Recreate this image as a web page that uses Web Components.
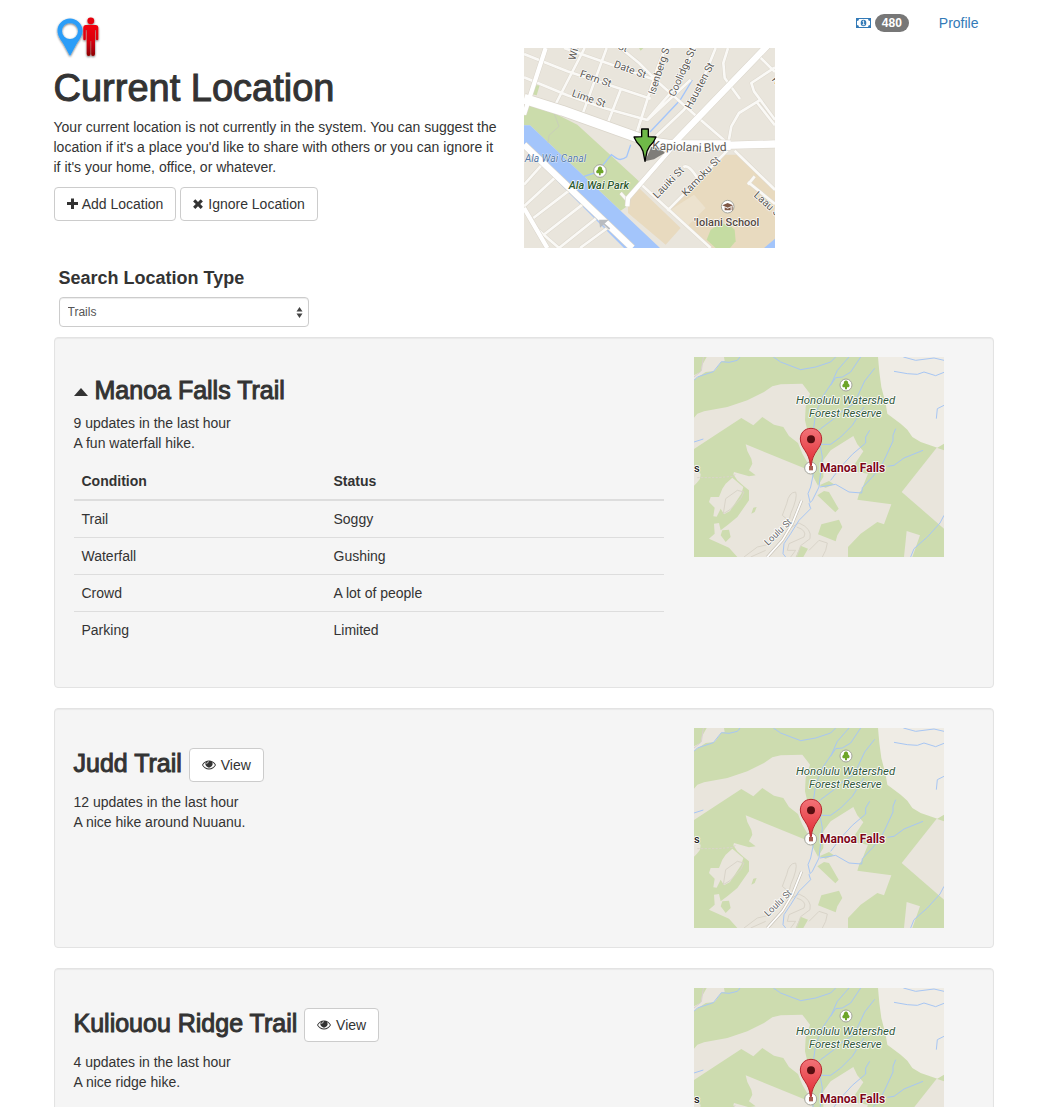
<!DOCTYPE html>
<html lang="en">
<head>
<meta charset="utf-8">
<meta name="viewport" content="width=device-width, initial-scale=1">
<title>Current Location</title>
<style>
  body { margin: 0; background: #fff; color: #333; font: 14px/20px "Liberation Sans", Arial, sans-serif; }
</style>
</head>
<body>
<location-page>
  <current-location slot="header">
    Your current location is not currently in the system. You can suggest the location if it's a place you'd like to share with others or you can ignore it if it's your home, office, or whatever.
  </current-location>
  <type-search slot="search"></type-search>
  <trail-card name="Manoa Falls Trail" updates="9" open>
    A fun waterfall hike.
    <condition-table slot="details" rows="Trail:Soggy;Waterfall:Gushing;Crowd:A lot of people;Parking:Limited"></condition-table>
  </trail-card>
  <trail-card name="Judd Trail" updates="12">A nice hike around Nuuanu.</trail-card>
  <trail-card name="Kuliouou Ridge Trail" updates="4">A nice ridge hike.</trail-card>
</location-page>

<script>
const define = (name, html, setup) => customElements.define(name, class extends HTMLElement {
  connectedCallback() {
    if (this.shadowRoot) return;
    this.attachShadow({ mode: 'open' }).innerHTML = html;
    if (setup) setup(this, this.shadowRoot);
  }
});

/* Small glyph icons, coloured by the surrounding text */
const ICONS = {
  plus: [11, 11, '<path d="M4 0.5h3v3.500h4v3h-4v4h-3v-4h-4v-3h4z"/>'],
  times: [10, 10, '<path d="M2.300 0.300L5 3 7.700 0.300 9.900 2.400 7.200 5.100 9.900 7.800 7.700 9.900 5 7.300 2.300 9.900 0.100 7.800 2.800 5.100 0.100 2.400z"/>'],
  eye: [14, 10, '<path fill-rule="evenodd" d="M7 0.500C10 0.500 12.600 2.300 14 5 12.600 7.700 10 9.500 7 9.500S1.400 7.700 0 5C1.400 2.300 4 0.500 7 0.500zM4.200 1.900C2.900 2.600 1.800 3.700 1 5 2.300 7.100 4.500 8.600 7 8.600S11.700 7.100 13 5C12.200 3.700 11.100 2.600 9.800 1.900A3.500 3.500 0 1 1 4.200 1.900z"/><path d="M7 1.700A2.400 2.400 0 0 0 4.700 4" fill="none" stroke="#fff" stroke-width=".7"/>'],
  caret: [14, 8, '<path d="M7 0L14 8H0z"/>'],
  money: [15, 10, '<path fill-rule="evenodd" d="M0 0h15v10H0zM3 1A2 2 0 0 1 1 3v4a2 2 0 0 1 2 2h9a2 2 0 0 1 2-2V3a2 2 0 0 1-2-2z"/><ellipse cx="7.500" cy="5" rx="2.800" ry="3.300"/><path d="M6.500 3.600L7.600 2.900V6.500M6.300 6.700H8.800" fill="none" stroke="#fff" stroke-width=".9"/>']
};
define('glyph-icon', '<style>:host{display:inline-block}svg{display:block;fill:currentColor}</style>', (el, root) => {
  const [w, h, art] = ICONS[el.getAttribute('name')];
  root.innerHTML += `<svg width="${w}" height="${h}" viewBox="0 0 ${w} ${h}" aria-hidden="true">${art}</svg>`;
});

define('action-button', `
<style>
  :host { display: inline-block; vertical-align: middle; }
  button { display: block; margin: 0; padding: 6px 12px; border: 1px solid #ccc; border-radius: 4px; background: #fff; color: #333; font: 14px/20px "Liberation Sans", Arial, sans-serif; white-space: nowrap; cursor: pointer; -webkit-text-stroke: 0; }
  button:hover { background: #e6e6e6; }
  glyph-icon { margin-right: 1px; }
</style>
<button type="button"><slot></slot></button>`, (el, root) => {
  root.querySelector('slot').insertAdjacentHTML('beforebegin', `<glyph-icon name="${el.getAttribute('icon')}"></glyph-icon> `);
});

define('site-logo', `
<style>:host{display:block}svg{display:block}</style>
<svg width="48" height="46" viewBox="0 0 48 46" role="img" aria-label="Location">
  <defs>
    <linearGradient id="red" x1="0" y1="0" x2="0" y2="1"><stop offset="0" stop-color="#f20010"/><stop offset=".5" stop-color="#d9000c"/><stop offset="1" stop-color="#8c0005"/></linearGradient>
    <filter id="sh" x="-20%" y="-20%" width="140%" height="150%"><feDropShadow dx="0" dy="1" stdDeviation="1" flood-color="#000" flood-opacity=".6"/></filter>
  </defs>
  <g filter="url(#sh)">
    <path fill="#2a9df8" fill-rule="evenodd" d="M16 4.500C22.500 4.500 28.500 9.500 28.500 16.500 28.500 22 25 26 22.500 30L16 42 9.500 30C7 26 3.500 22 3.500 16.500 3.500 9.500 9.500 4.500 16 4.500zM16 9a8 8 0 1 0 0 16 8 8 0 1 0 0-16z"/>
    <g fill="url(#red)"><circle cx="36.800" cy="6.800" r="3.400" fill="#e5000e"/>
    <path d="M31.500 11H42Q44.300 11 44.300 13.500V25.500Q43.200 27 41.800 25.500V16H41V40Q41 42 39 42T37.200 40V27H36.500V40Q36.500 42 34.600 42T32.700 40V16H31.800V25.500Q30.500 27 29.300 25.500V13.500Q29.300 11 31.500 11z"/></g>
  </g>
</svg>`);

/* Street map round the current position */
define('city-map', `
<style>
  :host { display: block; width: 251px; }
  svg { display: block; width: 100%; height: auto; }
  text { font-family: Roboto, sans-serif; font-size: 31px; fill: #5d5a55; stroke: #fff; stroke-width: 4px; stroke-linejoin: round; paint-order: stroke; }
</style>
<svg viewBox="0 0 753 600" role="img" aria-label="Map of Kapiolani Blvd">
  <rect width="753" height="600" fill="#e9e5dc"/>
  <path fill="#cbdcab" d="M15 172L90 195 160 230 345 400 305 478 290 488 18 232H0V205zM30 112L47 112 38 142 22 138zM345 0H358L350 8z"/>
  <path fill="#e9e5dc" d="M165 228L350 280 420 300 345 398z"/>
  <path fill="#e8dabf" d="M345 420L312 465 312 495 425 590 470 540zM595 320H640L753 430V600H562L500 540 440 485z"/>
  <path fill="#ece2ce" d="M510 440L545 480 490 535 440 485z"/>
  <path fill="#c5dca2" d="M560 545Q590 525 612 528L632 545 635 580 618 600H575L548 575z"/>
  <path fill="#a3c5fb" d="M0 232H18L408 600H300L0 300zM720 600L753 572V600z"/>
  <g fill="none" stroke="#a3c5fb" stroke-width="4"><path d="M505 96L468 157 378 252M320 290L308 326Q290 340 278 331L262 320 238 350 212 375 180 385"/></g>
  <g fill="none" stroke="#c9cfb9" stroke-width="3"><path d="M90 195L105 235 75 262 72 285"/></g>
  <g fill="none" stroke="#ddd8ce" stroke-width="11" stroke-linejoin="round"><path id="streets" d="M0 18L130 70 380 152M0 88L130 142 240 180 370 216 500 95M120 0L240 42 400 98M290 0L345 45 405 105 520 207 618 292M182 0L95 168M248 0L175 200M290 125L250 228M425 0L400 60 338 255M512 0L470 100 370 215M575 0L530 110 480 185 385 275M612 0L598 45 602 90 648 153M695 15L753 72M753 58L682 105 690 130 753 215M710 155L645 195 622 235 612 290M753 232L700 165M618 300L430 488M350 408L560 600M478 358Q492 345 520 390M632 308L753 425M672 410L692 385M672 402L753 468M0 410L52 352M0 475L92 390M28 510L135 428M62 558L175 470M105 600L215 512M168 600L250 540M30 535L105 600M290 435L312 460"/></g>
  <use href="#streets" fill="none" stroke="#faf9f6" stroke-width="8" stroke-linejoin="round"/>
  <g fill="none" stroke="#dad5cb" stroke-linejoin="round"><path stroke-width="34" d="M0 152L115 188 350 272Q405 290 460 292L620 292"/><path stroke-width="25" d="M600 292L753 288"/><path stroke-width="22" d="M0 290L325 600"/><path stroke-width="22" d="M432 303L738-15"/><path stroke-width="16" d="M65 0L0 200M310 475L312 450 450 292M0 480L70 600"/></g>
  <g fill="none" stroke="#fff" stroke-linejoin="round"><path stroke-width="30" d="M0 152L115 188 350 272Q405 290 460 292L620 292"/><path stroke-width="22" d="M600 292L753 288"/><path stroke-width="19" d="M0 290L325 600M432 303L738-15"/><path stroke-width="13" d="M65 0L0 200M310 475L312 450 450 292M0 480L70 600"/></g>
  <path d="M257 543L235 524M228 518h20l-18 16z" fill="#b9bcc0" stroke="#b9bcc0" stroke-width="5"/>
  <path fill="#000" opacity=".45" d="M363 340L382 297 410 300 422 315 390 334z"/>
  <text transform="translate(154 38) rotate(-76)">Wil</text>
  <text transform="translate(280 2) rotate(22)">St</text>
  <text transform="translate(268 57) rotate(20)">Date St</text>
  <text transform="translate(166 86) rotate(19)">Fern St</text>
  <text transform="translate(142 144) rotate(19)">Lime St</text>
  <text transform="translate(392 142) rotate(-72)">Isenberg St</text>
  <text transform="translate(452 148) rotate(-66)">Coolidge St</text>
  <text transform="translate(500 185) rotate(-62)">Hausten St</text>
  <text transform="translate(384 304) rotate(3)" style="font-size:36px">Kapiolani</text>
  <text transform="translate(540 312) rotate(-3)" style="font-size:36px">Blvd</text>
  <text transform="translate(400 453) rotate(-46)">Lauiki St</text>
  <text transform="translate(486 446) rotate(-46)">Kamoku St</text>
  <text transform="translate(688 444) rotate(42)">Laau St</text>
  <text transform="translate(742 95) rotate(50)">K</text>
  <text x="2" y="342" style="font-size:31px;font-style:italic;fill:#5478a6;stroke-width:2px">Ala Wai Canal</text>
  <text x="134" y="424" style="font-size:33px;font-style:italic;font-weight:500;fill:#2e5b32">Ala Wai Park</text>
  <text x="510" y="533" style="font-size:33px;font-weight:500;fill:#55483e">'Iolani School</text>
  <g fill="#fff" stroke="#a4a59c" stroke-width="3"><circle cx="228" cy="369" r="19"/><circle cx="611" cy="476" r="19"/></g>
  <path fill="#6ea52a" d="M228 355Q236 358 235 365 242 370 236 376H230V382H225V376H219Q213 370 221 365 220 358 228 355z"/>
  <path fill="#805947" d="M611 465L627 472 611 479 595 472zM602 478L611 482 620 478V487H602zM623 475h3v12h-3z"/>
  <path fill="#6fba48" stroke="#000" stroke-width="4" stroke-linejoin="round" d="M353 243H373V266L396 267 388 282Q374 295 369 310L363 340 357 310Q352 295 338 282L330 267 353 266z"/>
</svg>`);

/* Forest reserve map with the trailhead pin */
define('trail-map', `
<style>
  :host { display: block; width: 250px; }
  svg { display: block; width: 100%; height: auto; }
  text { font-family: Roboto, sans-serif; stroke: #fff; stroke-width: 5px; stroke-linejoin: round; paint-order: stroke; }
  .area { font-size: 34px; font-style: italic; fill: #31583a; }
</style>
<svg viewBox="0 0 750 600" role="img" aria-label="Map of Manoa Falls">
  <defs><linearGradient id="pin" x1="0" y1="0" x2="0" y2="1"><stop offset="0" stop-color="#f27378"/><stop offset="1" stop-color="#e22c33"/></linearGradient></defs>
  <rect width="750" height="600" fill="#cddcaf"/>
  <path fill="#efece5" d="M552 0L556 45 562 90 575 140 580 170 620 200 640 218 655 240 680 255 730 272 750 260V0z"/>
  <g fill="#e9e5dc">
    <path d="M38 0H90L92 12 82 14 62 42 35 45 0 68V55L20 44 24 25z"/>
    <path d="M0 182L10 170 30 163 100 150 160 130 210 105 235 88 260 82 325 80 348 110 335 150 333 190 340 220 360 300 345 325 325 290 312 258 285 237 268 210 240 203 205 180 178 205 142 183 0 276z"/>
    <path d="M155 262L335 335 350 345 372 386 388 360 388 310 410 280 478 237 490 262 508 283 480 325 490 345 522 350 512 375 503 400 497 405 490 428 592 442 570 502 550 495 500 530 462 570V600H130L105 572 45 545 62 530 60 500 75 498 80 520 100 505 130 480 165 430 165 400 150 388 130 370 118 352 120 345 165 358 185 355 165 340 175 320 172 305 160 282z"/>
    <path d="M115 362L148 390 142 410 108 462 90 472 80 455 68 479 58 478 62 452 45 435 50 420 75 420 85 395 95 380z"/>
    <path d="M0 340L20 350 18 365 10 376 0 386z"/>
    <path d="M728 272L750 280V515L623 405z"/>
    <path d="M638 522L678 535 655 600H630z"/>
  </g>
  <path fill="#cddcaf" d="M85 520L105 518 110 540 95 555 80 535zM390 402L405 405 434 455 424 466 370 415zM372 532L382 502 435 488 445 510 430 535 425 553zM376 385L405 372 420 382 395 392zM320 566L342 575 328 600H305zM178 452L188 450 182 465 172 470z"/>
  <g fill="none" stroke="#d9d4c9" stroke-width="3">
    <path d="M305 405Q285 405 278 440L265 475 285 492M305 405Q312 420 290 470L285 492M150 600L190 570 225 562M170 600L215 580M285 515L315 498Q355 515 348 545L320 566 308 600M308 510Q340 520 330 540L285 560 280 580 305 580 290 600M345 580L375 550 400 558 395 580 385 600"/>
    <path d="M10 362H30L70 362 118 358 125 350" stroke-dasharray="7 4"/>
    <path d="M95 425L130 400 150 405 140 425 108 458 88 470z"/>
  </g>
  <path d="M323 430L295 500 265 550 220 600" fill="none" stroke="#c8c3b8" stroke-width="9"/>
  <path d="M323 430L295 500 265 550 220 600" fill="none" stroke="#fff" stroke-width="5"/>
  <path d="M0 60L22 42 28 0" fill="none" stroke="#d9d0d0" stroke-width="3"/>
  <g fill="none" stroke="#a7c6f4" stroke-width="3" stroke-linejoin="round">
    <path d="M0 70L10 60 58 44 82 14 105 16 130 10 138 0M238 0L260 15 320 38 365 30 410 15 425 0M465 0L430 40 412 80 385 120 365 170 358 220M500 0L470 45 445 60 425 62 410 85M542 34L512 72 480 140 440 165 420 185 380 215 360 235M600 43L640 50 670 52 690 45 725 56 750 46M628 0L665 10 720 3 750 10M750 145L730 155 727 185M0 255L28 246M527 220L515 240 515 258 475 292 440 330 410 370M605 215L597 235 597 252 575 300 560 330 535 360 505 392 503 408 465 405 425 382 378 390M687 280L630 303 600 325 580 328M350 262H410L440 240 475 205 510 150M378 262L385 300 375 390 355 430 345 440 350 455 315 490 290 530 270 560 267 590 275 600M358 350L350 390 342 410 348 435M750 475L738 498 700 540 660 575 650 600"/>
  </g>
  <text x="306" y="140" class="area">Honolulu Watershed</text>
  <text x="345" y="180" class="area">Forest Reserve</text>
  <text transform="translate(222 567) rotate(-44)" style="font-size:28px;fill:#666">Loulu St</text>
  <text x="0" y="344" style="font-size:33px;font-weight:500;fill:#222">s</text>
  <g fill="#fff" stroke="#a4a59c" stroke-width="3"><circle cx="456" cy="84" r="18"/><circle cx="350" cy="333" r="18"/></g>
  <text x="378" y="346" style="font-size:36px;font-weight:700;fill:#7c0618">Manoa Falls</text>
  <path fill="#6ea52a" d="M456 70Q464 73 463 80 470 85 464 91H459V97H453V91H447Q442 85 449 80 448 73 456 70z"/>
  <path fill="url(#pin)" stroke="#b5262d" stroke-width="3" d="M351 214C370 214 383 228 383 246 383 274 354 285 352 326H349C347 285 319 274 319 246 319 228 332 214 351 214z"/>
  <rect x="345" y="327" width="12" height="13" fill="#a65d50"/>
  <circle cx="351" cy="247" r="12" fill="#560e10"/>
</svg>`);

define('account-nav', `
<style>
  :host { display: block; }
  nav { display: flex; justify-content: flex-end; gap: 30px; padding: 13px 15px 0 0; }
  a { display: flex; align-items: center; gap: 4px; color: #337ab7; text-decoration: none; }
  .badge { padding: 3px 7px; border-radius: 10px; background: #777; color: #fff; font-weight: 700; font-size: 12px; line-height: 12px; }
</style>
<nav><a href="#updates" aria-label="Updates"><glyph-icon name="money"></glyph-icon><span class="badge">480</span></a><a href="#profile">Profile</a></nav>`);

define('current-location', `
<style>
  :host { display: grid; grid-template-columns: 1fr 1fr; }
  .about { padding: 14px 15px 0 0; }
  h1 { margin: 8px 0 9px; font-size: 38px; line-height: 40px; font-weight: 400; -webkit-text-stroke: 1px; }
  p { margin: 0 0 10px; padding-right: 8px; }
  .actions { display: flex; gap: 4px; }
  city-map { margin-top: 15px; }
</style>
<section class="about">
  <site-logo></site-logo>
  <h1>Current Location</h1>
  <p><slot></slot></p>
  <div class="actions"><action-button icon="plus">Add Location</action-button><action-button icon="times">Ignore Location</action-button></div>
</section>
<section><account-nav></account-nav><city-map></city-map></section>`);

define('type-search', `
<style>
  :host { display: block; padding: 20px 5px 10px; }
  label { display: block; margin-bottom: 9px; font-size: 18px; line-height: 20px; font-weight: 700; }
  .box { position: relative; width: 250px; }
  select { display: block; box-sizing: border-box; width: 100%; height: 30px; padding: 0 20px 0 8px; border: 1px solid #ccc; border-radius: 4px; background: #fff; box-shadow: inset 0 1px 1px rgba(0,0,0,.075); color: #555; font: 12px/20px "Liberation Sans", Arial, sans-serif; appearance: none; }
  svg { position: absolute; right: 6px; top: 10px; fill: #444; pointer-events: none; }
</style>
<label for="type">Search Location Type</label>
<div class="box"><select id="type"><option>Trails</option></select>
<svg width="7" height="11" viewBox="0 0 7 11" aria-hidden="true"><path d="M3.500 0L6.500 4.500H.5zM3.500 11L6.500 6.500H.5z"/></svg></div>`);

define('condition-table', `
<style>
  :host { display: block; margin-bottom: 20px; }
  table { width: 100%; border-collapse: separate; border-spacing: 0; table-layout: fixed; }
  th, td { padding: 8px; text-align: left; font-size: 14px; line-height: 20px; }
  th { border-bottom: 2px solid #ddd; font-weight: 700; }
  th:first-child { width: 236px; }
  tr + tr td { border-top: 1px solid #ddd; }
</style>
<table><thead><tr><th scope="col">Condition</th><th scope="col">Status</th></tr></thead><tbody></tbody></table>`,
(el, root) => {
  const body = root.querySelector('tbody');
  for (const row of el.getAttribute('rows').split(';')) {
    const tr = body.insertRow();
    for (const value of row.split(':')) tr.insertCell().textContent = value;
  }
});

define('trail-card', `
<style>
  :host { display: grid; grid-template-columns: repeat(12, 1fr); column-gap: 30px; align-items: start; margin-bottom: 20px; padding: 19px; border: 1px solid #e3e3e3; border-radius: 4px; background: #f5f5f5; box-shadow: inset 0 1px 1px rgba(0,0,0,.05); }
  .info { grid-column: span 8; }
  trail-map { grid-column: span 4; }
  h2 { margin: 20px 0 10px; font-size: 25px; line-height: 26px; font-weight: 400; -webkit-text-stroke: 1px; }
  .toggle { display: flex; align-items: center; gap: 7px; padding: 0; border: 0; background: none; color: inherit; font: inherit; cursor: pointer; -webkit-text-stroke: inherit; }
  .toggle glyph-icon { padding-top: 4px; }
  p { margin: 0 0 10px; }
</style>
<div class="info"><h2></h2><p><span></span> updates in the last hour<br><slot></slot></p><slot name="details"></slot></div>
<trail-map></trail-map>`, (el, root) => {
  const name = el.getAttribute('name');
  root.querySelector('h2').innerHTML = el.hasAttribute('open')
    ? `<button class="toggle" type="button" aria-expanded="true"><glyph-icon name="caret"></glyph-icon>${name}</button>`
    : `${name} <action-button icon="eye">View</action-button>`;
  root.querySelector('span').textContent = el.getAttribute('updates');
});

define('location-page', `
<style>
  :host { display: block; box-sizing: border-box; max-width: 970px; margin: 0 auto; padding: 0 15px; }
</style>
<header><slot name="header"></slot></header>
<slot name="search"></slot>
<main><slot></slot></main>`);
</script>
</body>
</html>
